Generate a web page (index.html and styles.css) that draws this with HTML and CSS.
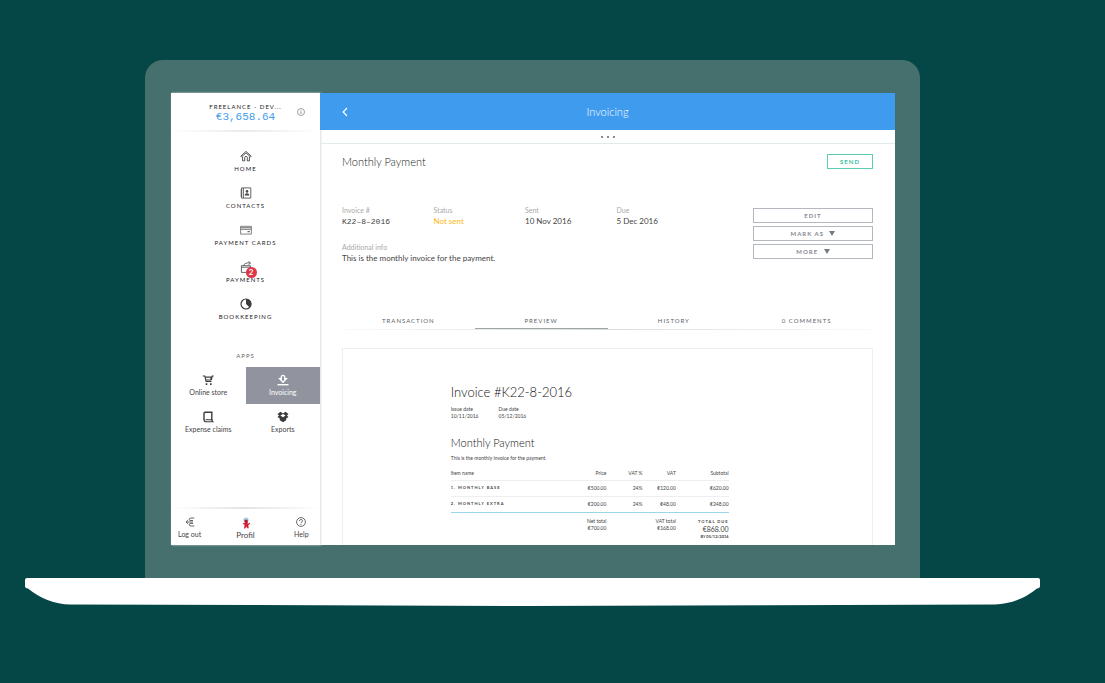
FILE: index.html
```html
<!DOCTYPE html>
<html lang="en">
<head>
<meta charset="utf-8">
<title>Invoicing</title>
<link rel="stylesheet" href="styles.css">
</head>
<body>
<div class="laptop">
  <div class="lid">
    <div class="screen">
      <aside class="sidebar">
        <header class="account">
          <div class="account-text">
            <div class="account-name">FREELANCE - DEV...</div>
            <div class="balance">€3,658.64</div>
          </div>
          <svg class="info" viewBox="0 0 8 8"><circle cx="4" cy="4" r="3.5" fill="none" stroke="#777" stroke-width=".7"/><path d="M4 3.4v2.6M4 1.9v.8" stroke="#777" stroke-width=".8"/></svg>
        </header>
        <nav class="menu">
          <a class="menu-item" href="#"><svg class="icon" viewBox="0 0 12 12" fill="none" stroke="#444" stroke-width=".9"><path d="M.8 6.2 6 1.4l5.2 4.8-.7.7L6 2.9 1.5 6.9zM2.6 6.6v4.3h2.1V7.6c0-1.7 2.6-1.7 2.6 0v3.3h2.1V6.6"/></svg>HOME</a>
          <a class="menu-item" href="#"><svg class="icon" viewBox="0 0 12 12" fill="none" stroke="#555" stroke-width=".9"><path d="M1.5.9h9.3v10.2H1.500zM3.400 1v10"/><path d="M.3 3h2M.3 5h2M.3 7h2M.3 9h2" stroke-width=".8"/><circle cx="7" cy="4.400" r="1.300" fill="#444" stroke="none"/><path d="M4.700 8.500c0-3 4.600-3 4.600 0z" fill="#444" stroke="none"/></svg>CONTACTS</a>
          <a class="menu-item" href="#"><svg class="icon" viewBox="0 0 12 12" fill="none" stroke="#666"><path d="M.6 2.300h10.800v7.800H.6z" stroke-width=".8"/><path d="M.6 3.700h10.800M.6 5.300h10.800" stroke-width=".9"/><path d="M7.500 7.600h2.300" stroke-width="1.300"/></svg>PAYMENT CARDS</a>
          <a class="menu-item" href="#"><span class="icon-wrap"><svg class="icon" viewBox="0 0 12 12" fill="none" stroke="#555" stroke-width=".9"><path d="M1.400 4.700h9v6.700h-9zM1.400 6.200h9"/><path d="M3.500 4.400c1-2 3-2.800 6.700-2.500M8.500.3l2 1.600-1.700 1.800"/></svg><span class="badge">2</span></span>PAYMENTS</a>
          <a class="menu-item" href="#"><svg class="icon" viewBox="0 0 12 12"><circle cx="6" cy="6" r="5" fill="none" stroke="#3c3c3c" stroke-width="1.200"/><path d="M6 6V1a5 5 0 0 1 3.700 8.500z" fill="#3c3c3c"/></svg>BOOKKEEPING</a>
        </nav>
        <div class="apps-title">APPS</div>
        <nav class="apps">
          <a class="app" href="#"><svg class="icon" viewBox="0 0 12 12" fill="none" stroke="#3c3c3c"><path d="M.8 2h2l1.300 5.500h5.400" stroke-width="1.100"/><path d="M3.200 3.200h6.200L8.700 6H4M9.300 6l.9-4h1.500" stroke-width="1.200"/><path d="M3.700 9.200h1.600v1.700H3.700zM8 9.200h1.600v1.700H8z" fill="#3c3c3c" stroke="none"/></svg>Online store</a>
          <a class="app app-active" href="#"><svg class="icon" viewBox="0 0 12 12" fill="none" stroke="#fff"><path d="M4.300 4.700H2.700L6 8.200l3.300-3.500H7.700V3.500c0-2.900-3.400-2.900-3.400 0z" stroke-width="1.400"/><path d="M.5 10.700h11" stroke-width="1.400"/></svg>Invoicing</a>
          <a class="app" href="#"><svg class="icon" viewBox="0 0 12 12" fill="none" stroke="#3c3c3c"><path d="M2 9V2.500C2 1.600 2.400 1.200 3.300 1.200h6.500v8.300" stroke-width="1.400"/><path d="M2 8.800c0 1.400.7 2 2 2h7c-.7-.6-1-1.100-1-2H3.500" stroke-width="1.100"/></svg>Expense claims</a>
          <a class="app" href="#"><svg class="icon" viewBox="0 0 12 12" fill="#3c3c3c"><path d="M3.500.8 6 2.600 8.500.8l3 2.100-1.600 1.700 1.600 1.500-2.300 1.500v1.700L6 11.300 2.800 9.300V7.600L.5 6.100l1.600-1.500L.5 2.900z"/><path d="M6 3 8.600 4.600 6 6.300 3.400 4.600z" fill="#fff"/></svg>Exports</a>
        </nav>
        <nav class="side-footer">
          <a class="foot-link" href="#"><svg class="icon-s" viewBox="0 0 10 10" fill="none" stroke="#555" stroke-width=".9"><path d="M9.300 1H6Q4 1 4 3M4 7q0 2 2 2h3.300M8 5H1M3 3.200 1 5l2 1.800M4.500 3.500H8M4.500 6.500H8"/></svg>Log out</a>
          <a class="foot-link foot-profile" href="#"><svg class="icon" viewBox="0 0 12 12"><circle cx="6" cy="3" r="2.600" fill="#9fcfdf"/><path d="M4.500 2.800h3l.5 2.600-1 .9 2 .2.600-1 .6 1.200-1.900 1.500.4 3H7.300L6.300 9.600l-1 1.900H4l.6-3.700-1.900-1L3.200 6l1.500.3z" fill="#cf1f35"/><path d="M5.200 3.500h1.700v1H5.200z" fill="#713"/></svg>Profil</a>
          <a class="foot-link" href="#"><svg class="icon-s" viewBox="0 0 10 10" fill="none" stroke="#444" stroke-width=".8"><circle cx="5" cy="5" r="4.400"/><path d="M3.500 4c0-2 3-2 3-.2C6.500 5 5 4.800 5 6.200M5 7v.9" stroke-width=".9"/></svg>Help</a>
        </nav>
      </aside>
      <main class="main">
        <header class="topbar">
          <button class="back" aria-label="Back"><svg viewBox="0 0 6 10" fill="none" stroke="#fff" stroke-width="1.200"><path d="M5 1 1.200 5 5 9"/></svg></button>
          <h1 class="topbar-title">Invoicing</h1>
        </header>
        <div class="handle"><i></i><i></i><i></i></div>
        <div class="content">
          <div class="title-row">
            <h2 class="page-title">Monthly Payment</h2>
            <button class="btn btn-send">SEND</button>
          </div>
          <div class="details">
            <dl class="meta">
              <div><dt>Invoice #</dt><dd class="invoice-no">K22–8–2016</dd></div>
              <div><dt>Status</dt><dd class="status">Not sent</dd></div>
              <div><dt>Sent</dt><dd>10 Nov 2016</dd></div>
              <div><dt>Due</dt><dd>5 Dec 2016</dd></div>
              <div class="meta-wide"><dt>Additional info</dt><dd>This is the monthly invoice for the payment.</dd></div>
            </dl>
            <div class="actions">
              <button class="btn">EDIT</button>
              <button class="btn">MARK AS <span class="caret"></span></button>
              <button class="btn">MORE <span class="caret"></span></button>
            </div>
          </div>
          <div class="tabs">
            <button class="tab">TRANSACTION</button>
            <button class="tab tab-active">PREVIEW</button>
            <button class="tab">HISTORY</button>
            <button class="tab">0 COMMENTS</button>
          </div>
          <article class="sheet">
            <h2 class="sheet-title">Invoice #K22-8-2016</h2>
            <div class="dates">
              <div>Issue date<br>10/11/2016</div>
              <div>Due date<br>05/12/2016</div>
            </div>
            <h3 class="sheet-sub">Monthly Payment</h3>
            <p class="sheet-note">This is the monthly invoice for the payment.</p>
            <table class="lines">
              <colgroup><col class="c-item"><col class="c-price"><col class="c-pct"><col class="c-vat"><col class="c-sub"></colgroup>
              <thead><tr><th>Item name</th><th>Price</th><th>VAT %</th><th>VAT</th><th>Subtotal</th></tr></thead>
              <tbody>
                <tr><td>1. MONTHLY BASE</td><td>€500.00</td><td>24%</td><td>€120.00</td><td>€620.00</td></tr>
                <tr><td>2. MONTHLY EXTRA</td><td>€200.00</td><td>24%</td><td>€48.00</td><td>€248.00</td></tr>
              </tbody>
              <tfoot><tr><td></td><td>Net total<br>€700.00</td><td></td><td>VAT total<br>€168.00</td><td><div class="due-label">TOTAL DUE</div><div class="due-sum">€868.00</div><div class="due-label due-by">BY 05/12/2016</div></td></tr></tfoot>
            </table>
          </article>
        </div>
      </main>
    </div>
  </div>
  <svg class="base" viewBox="0 0 1015 28" preserveAspectRatio="none"><path d="M2 0h1011q2 0 2 2v6q0 2-3 2.500Q993 26 970 26.500L500 28 45 26.500Q22 26 3 10.500 0 10 0 8V2q0-2 2-2z" fill="#fff"/></svg>
</div>
</body>
</html>
```
FILE: styles.css
```css
* { box-sizing: border-box; }
body {
  margin: 0;
  background: #054746;
  color: #444;
  font-family: Lato, "Open Sans", sans-serif;
  font-size: 7px;
  line-height: 10px;
}
h1, h2, h3, p, dl, dd { margin: 0; font-weight: 400; }
a { color: inherit; text-decoration: none; }
button { margin: 0; padding: 0; border: 0; background: none; font: inherit; color: inherit; }
svg { display: block; }

.laptop { padding: 60px 65px 0 25px; }
.lid {
  margin: 0 120px;
  padding: 33px 25px 33px 26px;
  border-radius: 18px 18px 0 0;
  background: #45706e;
}
.base { width: 100%; height: 28px; }
.screen { display: flex; background: #fff; }

.sidebar {
  flex: 0 0 149px;
  display: flex;
  flex-direction: column;
  box-shadow: 1px 0 2px #ddd;
}
.account {
  position: relative;
  height: 39px;
  padding-top: 9px;
  text-align: center;
  border-bottom: 2px solid;
  border-image: linear-gradient(90deg, #fff, #eaeaea 50%, #fff) 1;
}
.account-name { font-size: 6px; line-height: 10px; letter-spacing: 1px; color: #222; }
.balance { font: 11px/10px "Liberation Mono", monospace; color: #3f9dec; }
.info { position: absolute; right: 15px; top: 15px; width: 8px; height: 8px; }
.menu { display: grid; gap: 12px; padding-top: 18px; }
.menu-item {
  display: flex;
  flex-direction: column;
  align-items: center;
  height: 25px;
  gap: 2px;
  font-size: 6px;
  line-height: 10px;
  letter-spacing: 1px;
  color: #222;
}
.icon { width: 12px; height: 12px; }
.icon-wrap { position: relative; }
.badge {
  position: absolute;
  left: 6px;
  top: 6px;
  width: 11px;
  height: 11px;
  border-radius: 50%;
  background: #e03546;
  color: #fff;
  font-size: 8px;
  line-height: 11px;
  font-weight: 700;
  letter-spacing: 0;
  text-align: center;
}
.apps-title { padding: 28px 0 6px; text-align: center; font-size: 6px; letter-spacing: 1px; color: #666; }
.apps { display: grid; grid-template-columns: 1fr 1fr; }
.app {
  display: flex;
  flex-direction: column;
  align-items: center;
  gap: 1px;
  height: 37px;
  padding-top: 7px;
}
.app-active { background: #91949e; color: #fff; }
.side-footer {
  display: grid;
  grid-template-columns: 1fr 2fr 1fr;
  height: 38px;
  margin-top: auto;
  padding-top: 8px;
  border-top: 2px solid;
  border-image: linear-gradient(90deg, #fff, #e4e4e4 50%, #fff) 1;
}
.foot-link { display: flex; flex-direction: column; align-items: center; gap: 2px; }
.foot-profile { gap: 1px; font-size: 8px; }
.icon-s { width: 10px; height: 10px; }

.main { flex: 1; min-width: 0; }
.topbar {
  display: grid;
  grid-template-columns: 28px 1fr 28px;
  align-items: center;
  height: 37px;
  background: #3f9bee;
  color: #fff;
}
.back { justify-self: end; width: 6px; height: 10px; }
.back svg { width: 6px; height: 10px; }
.topbar-title { text-align: center; font-size: 11px; line-height: 14px; font-weight: 300; }
.handle {
  display: flex;
  justify-content: center;
  align-items: center;
  gap: 4px;
  height: 14px;
  border-bottom: 1px solid #e3eaea;
}
.handle i { width: 2px; height: 2px; background: #8a8d98; }
.content { padding: 10px 22px 0; }
.title-row { display: flex; justify-content: space-between; align-items: center; }
.page-title { font-size: 11px; line-height: 15px; font-weight: 300; color: #222; }
.btn {
  height: 15px;
  border: 1px solid #b5b7be;
  color: #858892;
  font-size: 6px;
  line-height: 12px;
  font-weight: 700;
  letter-spacing: 1px;
}
.btn-send { width: 46px; border-color: #5fcdb4; color: #35bf9c; }
.details { display: flex; justify-content: space-between; padding-top: 36px; }
.meta {
  flex: 0 0 366px;
  display: grid;
  grid-template-columns: repeat(4, 1fr);
  row-gap: 14px;
}
.meta-wide { grid-column: 1 / -1; }
.meta dt { line-height: 10px; color: #aaa; }
.meta dd { font-size: 8px; line-height: 13px; }
.meta .invoice-no { font-family: "Liberation Mono", monospace; }
.meta .status { color: #fbb90f; }
.actions { display: grid; flex: 0 0 120px; gap: 3px; align-content: start; padding-top: 3px; }
.caret {
  display: inline-block;
  margin-left: 3px;
  border: 3px solid transparent;
  border-top: 5px solid #777a84;
  border-bottom: 0;
}
.tabs {
  display: grid;
  grid-template-columns: repeat(4, 1fr);
  margin-top: 50px;
  border-bottom: 1px solid;
  border-image: linear-gradient(90deg, #fafafa, #ddd 50%, #fafafa) 1;
}
.tab { height: 14px; padding-bottom: 2px; font-size: 6px; line-height: 10px; letter-spacing: 1px; color: #5c5f6a; }
.tab-active { border-bottom: 1px solid #9da5a6; }
.sheet {
  margin-top: 18px;
  padding: 34px 27% 5px 20.3%;
  border: 1px solid #eee;
  border-bottom: 0;
}
.sheet-title { font-size: 13px; line-height: 18px; font-weight: 300; color: #111; }
.dates { display: flex; gap: 20px; padding-top: 5px; font-size: 5px; line-height: 7px; }
.sheet-sub { padding-top: 16px; font-size: 11px; line-height: 14px; font-weight: 300; color: #111; }
.sheet-note { padding-top: 3px; font-size: 5px; line-height: 10px; }
.lines { width: 100%; margin-top: 4px; border-collapse: collapse; table-layout: fixed; font-size: 5px; line-height: 7px; }
.c-price { width: 16%; }
.c-pct { width: 13%; }
.c-vat { width: 12%; }
.c-sub { width: 19%; }
.lines th, .lines td { padding: 0; text-align: right; font-weight: 400; }
.lines th { height: 13px; }
.lines tbody td { height: 16px; border-top: 1px solid #eee; }
.lines tbody td:first-child { padding-bottom: 2px; letter-spacing: 1px; font-size: 4px; font-weight: 700; }
.lines th:first-child, .lines td:first-child { text-align: left; }
.lines tfoot td { padding-top: 5px; border-top: 1px solid #9bd5ea; vertical-align: top; }
.due-label { font-size: 4px; line-height: 7px; font-weight: 700; letter-spacing: 1px; white-space: nowrap; }
.due-by { letter-spacing: 0; }
.due-sum { font-size: 7px; line-height: 8px; }
```
